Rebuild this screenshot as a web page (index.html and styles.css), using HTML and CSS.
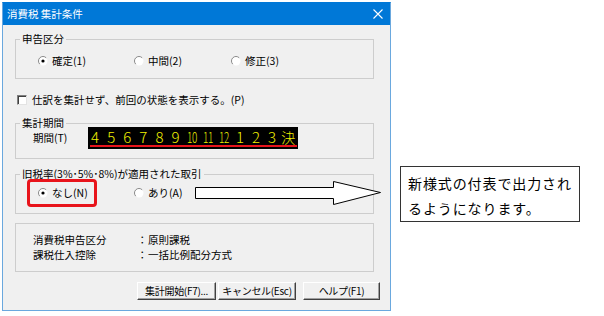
FILE: index.html
```html
<!DOCTYPE html>
<html lang="ja">
<head>
<meta charset="utf-8">
<link rel="stylesheet" href="styles.css">
</head>
<body>
<div class="dialog">
  <div class="titlebar">
    <span class="title">消費税 集計条件</span>
    <svg class="close" width="10" height="10" viewBox="0 0 10 10"><path d="M0.5 0.5L9.5 9.5M9.5 0.5L0.5 9.5" stroke="#fff" stroke-width="1.1" fill="none"/></svg>
  </div>
  <div class="content">
    <div class="group g1">
      <div class="glabel">申告区分</div>
      <div class="radios">
        <span class="radio w1"><svg class="rb" width="10" height="10" viewBox="0 0 10 10"><circle cx="5" cy="5" r="4.5" fill="#fff"/><path d="M1.8 8.2A4.5 4.5 0 0 1 8.2 1.8" stroke="#8a8a8a" fill="none"/><circle cx="5" cy="5" r="1.6" fill="#000"/></svg>確定(1)</span>
        <span class="radio w2"><svg class="rb" width="10" height="10" viewBox="0 0 10 10"><circle cx="5" cy="5" r="4.5" fill="#fff"/><path d="M1.8 8.2A4.5 4.5 0 0 1 8.2 1.8" stroke="#8a8a8a" fill="none"/></svg>中間(2)</span>
        <span class="radio"><svg class="rb" width="10" height="10" viewBox="0 0 10 10"><circle cx="5" cy="5" r="4.5" fill="#fff"/><path d="M1.8 8.2A4.5 4.5 0 0 1 8.2 1.8" stroke="#8a8a8a" fill="none"/></svg>修正(3)</span>
      </div>
    </div>
    <div class="check"><span class="cbox"></span>仕訳を集計せず、前回の状態を表示する。(P)</div>
    <div class="group g2">
      <div class="glabel">集計期間</div>
      <div class="period">
        <span class="plabel">期間(T)</span>
        <div class="display">
          <div class="digits">
            <span>4</span><span>5</span><span>6</span><span>7</span><span>8</span><span>9</span><span class="two">10</span><span class="two">11</span><span class="two">12</span><span>1</span><span>2</span><span>3</span><span class="kanji">決</span>
          </div>
        </div>
      </div>
    </div>
    <div class="group g3">
      <div class="glabel">旧税率(3%･5%･8%)が適用された取引</div>
      <div class="radios2">
        <span class="radio hl"><svg class="rb" width="10" height="10" viewBox="0 0 10 10"><circle cx="5" cy="5" r="4.5" fill="#fff"/><path d="M1.8 8.2A4.5 4.5 0 0 1 8.2 1.8" stroke="#8a8a8a" fill="none"/><circle cx="5" cy="5" r="1.6" fill="#000"/></svg>なし(N)</span>
        <span class="radio ari"><svg class="rb" width="10" height="10" viewBox="0 0 10 10"><circle cx="5" cy="5" r="4.5" fill="#fff"/><path d="M1.8 8.2A4.5 4.5 0 0 1 8.2 1.8" stroke="#8a8a8a" fill="none"/></svg>あり(A)</span>
      </div>
    </div>
    <div class="group g4">
      <div class="info"><span class="ik">消費税申告区分</span><span class="ic">：</span><span>原則課税</span></div>
      <div class="info"><span class="ik">課税仕入控除</span><span class="ic">：</span><span>一括比例配分方式</span></div>
    </div>
    <div class="buttons">
      <span class="btn b1">集計開始(F7)...</span>
      <span class="btn b2">キャンセル(Esc)</span>
      <span class="btn b3">ヘルプ(F1)</span>
    </div>
  </div>
</div>
<svg class="arrow" width="190" height="28" viewBox="0 0 190 28"><polygon points="1.5,7.5 139.5,7.5 139.5,1.5 186.5,12.5 139.5,24.5 139.5,18.5 1.5,18.5" fill="#fff" stroke="#000" stroke-width="1"/></svg>
<div class="callout">新様式の付表で出力され<br>るようになります。</div>
</body>
</html>
```
FILE: styles.css
```css
* { box-sizing: border-box; }
html, body { margin: 0; padding: 0; }
body {
  background: #fff;
  width: 604px;
  height: 316px;
  position: relative;
  overflow: hidden;
  font-family: "Noto Sans CJK JP", "Liberation Sans", sans-serif;
  font-size: 10.5px;
  color: #000;
}
.dialog {
  margin: 2px 0 0 2px;
  width: 389px;
  height: 309px;
  border: 1px solid #6aa8de;
  border-top-color: #0078d7;
  background: #f0f0f0;
}
.titlebar {
  height: 22px;
  background: #0078d7;
  display: flex;
  align-items: center;
  justify-content: space-between;
  padding: 0 7px 0 4px;
}
.title { color: #fff; font-size: 10.5px; line-height: 14px; }
.close { display: block; }
.content { padding-left: 12px; }
.group {
  width: 359px;
  border: 1px solid #cdcdcd;
}
.glabel {
  width: fit-content;
  height: 14px;
  line-height: 14px;
  margin: -8px 0 -6px 4px;
  padding: 0 2px;
  background: #f0f0f0;
  white-space: nowrap;
}
.g1 { margin-top: 14px; height: 40px; }
.radios { display: flex; height: 14px; align-items: center; padding-left: 22px; margin-top: 14px; }
.radio { display: flex; align-items: center; gap: 4px; line-height: 14px; white-space: nowrap; }
.rb { display: block; flex: none; }
.w1 { width: 96px; }
.w2 { width: 97px; }
.check {
  margin-top: 14px;
  height: 14px;
  line-height: 14px;
  display: flex;
  align-items: center;
  gap: 5px;
  padding-left: 2px;
}
.cbox {
  width: 10px;
  height: 10px;
  background: #fff;
  border: 1px solid;
  border-color: #808080 #e3e3e3 #e3e3e3 #808080;
  box-shadow: inset 1px 1px 0 #404040;
}
.g2 { margin-top: 16px; height: 36px; }
.period { display: flex; align-items: center; padding-left: 17px; margin-top: 3px; }
.plabel { width: 55px; line-height: 14px; }
.display {
  width: 210px;
  height: 22px;
  background: #000;
  padding: 2px 1px 2px 2px;
}
.digits {
  height: 18px;
  border-bottom: 2px solid #e8141b;
  display: flex;
}
.digits span {
  width: 16.1px;
  flex: none;
  text-align: center;
  color: #f0f000;
  font-family: "Noto Sans CJK JP", sans-serif;
  font-weight: 300;
  font-size: 15px;
  line-height: 16px;
}
.digits span:first-child { margin-left: -3px; }
.digits span.two { transform: scaleX(0.66); letter-spacing: -0.5px; }
.digits span.kanji { font-size: 14px; }
.g3 { margin-top: 15px; height: 40px; }
.radios2 { display: flex; align-items: center; padding-left: 11px; margin-top: 4px; }
.hl {
  width: 70px;
  height: 28px;
  border: 3px solid #e8141b;
  border-radius: 4px;
  padding-left: 8px;
}
.ari { margin-left: 37px; }
.g4 { margin-top: 9px; height: 49px; padding: 8px 0 0 17px; }
.info { display: flex; line-height: 15px; }
.ik { width: 104px; }
.ic { width: 11px; }
.buttons { display: flex; margin: 10px 0 0 122px; }
.btn {
  height: 18px;
  line-height: 16px;
  text-align: center;
  border: 1px solid;
  border-color: #fff #404040 #404040 #fff;
  box-shadow: inset -1px -1px 0 #a0a0a0;
  background: #f0f0f0;
  white-space: nowrap;
  letter-spacing: -0.3px;
  font-size: 10px;
}
.b1 { width: 79px; }
.b2 { width: 78px; margin-left: 2px; }
.b3 { width: 77px; margin-left: 7px; }
.arrow { position: absolute; left: 194px; top: 180px; }
.callout {
  position: absolute;
  left: 400px;
  top: 166px;
  width: 180px;
  height: 56px;
  border: 1px solid #333;
  background: #fff;
  font-size: 14px;
  letter-spacing: 0.9px;
  line-height: 24.5px;
  padding: 4px 0 0 7px;
  white-space: nowrap;
}
```
